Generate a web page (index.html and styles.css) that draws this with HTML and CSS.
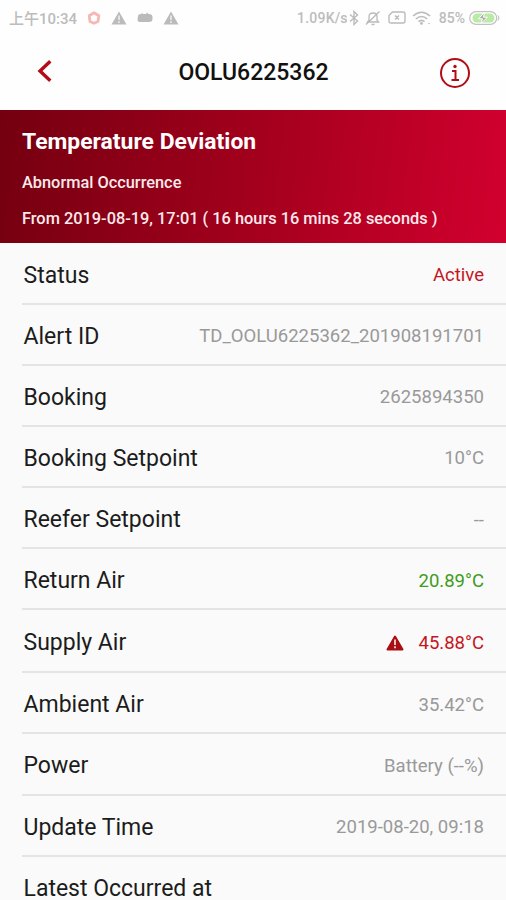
FILE: index.html
```html
<!DOCTYPE html>
<html lang="en">
<head>
    <meta charset="UTF-8">
    <meta name="viewport" content="width=device-width, initial-scale=1.0">
    <title>OOLU6225362</title>
    <link rel="stylesheet" href="styles.css">
</head>
<body>
    <div class="status-bar">
        <div class="status-left">
            <span class="clock">上午10:34</span>
            <svg class="ring" width="14" height="14" viewBox="0 0 14 14"><path d="M7 1.8L11.8 4.8 11 10.5 7 12.3 3 10.5 2.2 4.8Z" fill="none" stroke="#f6b8b2" stroke-width="2.8" stroke-linejoin="round"/></svg>
            <svg class="warn" width="16" height="14" viewBox="0 0 16 14"><path d="M8 0.5L15.5 13.5H0.5Z" fill="#bbb"/><path d="M8 4.5V9M8 10.3V12" stroke="#eee" stroke-width="1.6"/></svg>
            <svg class="robot" width="16" height="12" viewBox="0 0 16 12"><path d="M1 4Q1 2 4 2L5 1 6 2H9L10 0.5 11.5 2Q15.5 2 15.5 5V7Q15.5 10 12 10H3Q0.5 10 0.5 8Z" fill="#bbb"/></svg>
            <svg class="warn" width="16" height="14" viewBox="0 0 16 14"><path d="M8 0.5L15.5 13.5H0.5Z" fill="#bbb"/><path d="M8 4.5V9M8 10.3V12" stroke="#eee" stroke-width="1.6"/></svg>
        </div>
        <div class="status-right">
            <span class="speed">1.09K/s</span>
            <svg class="bluetooth" width="10" height="16" viewBox="0 0 10 16"><path d="M1 4.5L8.5 11 5 14.5V1.5L8.5 5 1 11.5" fill="none" stroke="#bbb" stroke-width="1.4"/></svg>
            <svg class="mute" width="16" height="16" viewBox="0 0 16 16"><path d="M2.5 12H13.5L12 10V6.5Q12 3 8 3T4 6.5V10ZM6.5 14.5H9.5M1 14.5L14.5 1.5" fill="none" stroke="#bbb" stroke-width="1.3"/></svg>
            <svg class="sim" width="18" height="13" viewBox="0 0 18 13"><path d="M4.5 1H15Q17 1 17 3V10Q17 12 15 12H3Q1 12 1 10V4.5ZM7 4.5L11 8.5M11 4.5L7 8.5" fill="none" stroke="#bbb" stroke-width="1.4"/></svg>
            <svg class="wifi" width="19" height="14" viewBox="0 0 19 14"><path d="M1 5Q9.5 -2.5 18 5M3.8 8Q9.5 3 15.2 8M6.5 10.6Q9.5 8 12.5 10.6" fill="none" stroke="#bbb" stroke-width="1.6"/><circle cx="9.5" cy="12.4" r="1.4" fill="#bbb"/><circle cx="17" cy="12.5" r="0.8" fill="#bbb"/></svg>
            <span class="percent">85%</span>
            <svg class="battery" width="31" height="14" viewBox="0 0 31 14"><rect x="0.7" y="0.7" width="27" height="12.6" rx="6.3" fill="#fff" stroke="#c2c2c2" stroke-width="1.2"/><rect x="3.5" y="2.5" width="22" height="9" rx="4.5" fill="#b9eba4"/><path d="M15.5 1.5L9.5 7.8H13.5L12 12.5 18.5 6.2H14.5Z" fill="#aaa" stroke="#fff" stroke-width="1"/><path d="M29 4.5Q31 7 29 9.5" fill="none" stroke="#bbb"/></svg>
        </div>
    </div>

    <div class="nav-bar">
        <svg class="back" width="16" height="24" viewBox="0 0 16 24"><path d="M13.3 2.2L3 12 13.3 21.8" fill="none" stroke="#b20c17" stroke-width="3.4"/></svg>
        <h1 class="nav-title">OOLU6225362</h1>
        <svg class="info" width="32" height="32" viewBox="0 0 32 32"><circle cx="16" cy="16" r="14" fill="none" stroke="#b20c17" stroke-width="2"/><circle cx="16" cy="9.5" r="1.7" fill="#b20c17"/><path d="M13 14H16.5V23M12.5 23H20" fill="none" stroke="#b20c17" stroke-width="2"/></svg>
    </div>

    <div class="banner">
        <h2 class="banner-title">Temperature Deviation</h2>
        <p class="banner-type">Abnormal Occurrence</p>
        <p class="banner-time">From 2019-08-19, 17:01 ( 16 hours 16 mins 28 seconds )</p>
    </div>

    <div class="list">
        <div class="row"><span class="label">Status</span><span class="value red">Active</span></div>
        <div class="row"><span class="label">Alert ID</span><span class="value">TD_OOLU6225362_201908191701</span></div>
        <div class="row"><span class="label">Booking</span><span class="value">2625894350</span></div>
        <div class="row"><span class="label">Booking Setpoint</span><span class="value">10°C</span></div>
        <div class="row"><span class="label">Reefer Setpoint</span><span class="value">--</span></div>
        <div class="row"><span class="label">Return Air</span><span class="value green">20.89°C</span></div>
        <div class="row row-alert">
            <span class="label">Supply Air</span>
            <span class="value red">
                <svg class="alert-icon" width="18" height="16" viewBox="0 0 18 16"><path d="M9 1.5L16.5 14.5H1.5Z" fill="#a80e14" stroke="#a80e14" stroke-width="2" stroke-linejoin="round"/><path d="M9 4.5V10M9 11.2V13.3" stroke="#e9c4c4" stroke-width="2"/></svg>45.88°C</span>
        </div>
        <div class="row"><span class="label">Ambient Air</span><span class="value">35.42°C</span></div>
        <div class="row"><span class="label">Power</span><span class="value">Battery (--%)</span></div>
        <div class="row"><span class="label">Update Time</span><span class="value">2019-08-20, 09:18</span></div>
        <div class="row"><span class="label">Latest Occurred at</span></div>
    </div>
</body>
</html>
```
FILE: styles.css
```css
body {
    font-family: Roboto, "Noto Sans CJK SC", sans-serif;
    margin: 0;
    height: 900px;
    overflow: hidden;
    background-color: #fafafa;
}
h1, h2, p {
    margin: 0;
}
.status-bar {
    display: flex;
    justify-content: space-between;
    align-items: center;
    height: 35px;
    padding: 0 6px 0 9px;
    background-color: #fefefe;
    color: #bcbcbc;
    font-size: 14px;
    font-weight: 500;
}
.status-left, .status-right {
    display: flex;
    align-items: center;
}
.clock {
    width: 68px;
    margin-right: 10px;
    font-size: 15px;
    white-space: nowrap;
}
.ring {
    margin-right: 10px;
}
.warn, .robot {
    margin-right: 10px;
}
.speed {
    letter-spacing: 0.2px;
    margin-right: 1px;
}
.bluetooth {
    margin-right: 6px;
}
.mute {
    margin-right: 7px;
}
.sim {
    margin-right: 6px;
}
.wifi {
    margin-right: 8px;
}
.percent {
    margin-right: 4px;
}
.nav-bar {
    display: flex;
    justify-content: space-between;
    align-items: center;
    box-sizing: border-box;
    height: 75px;
    padding: 0 35px 0 37px;
    background-color: #fefefe;
}
.back {
    margin-bottom: 4px;
}
.nav-title {
    /* the info icon is wider than the back arrow */
    padding-left: 15px;
    font-size: 23px;
    font-weight: 500;
    color: #111;
}
.banner {
    box-sizing: border-box;
    height: 133px;
    padding: 18px 22px 0;
    color: #fff;
    background: linear-gradient(97deg, #74000f, #a3001d 50%, #d2002e);
}
.banner-title {
    font-size: 22.9px;
    line-height: 28px;
    font-weight: 700;
}
.banner-type {
    margin-top: 16px;
    font-size: 16.35px;
    line-height: 22px;
    font-weight: 500;
    color: #fbeaec;
}
.banner-time {
    margin-top: 14px;
    font-size: 16.35px;
    line-height: 22px;
    font-weight: 500;
    color: #fbeaec;
}
.list {
    padding-top: 0.6px;
}
.row {
    display: flex;
    justify-content: space-between;
    align-items: center;
    box-sizing: border-box;
    height: 61.1px;
    margin-left: 22px;
    padding: 4px 22px 0 1.5px;
    border-bottom: 2px solid #e4e4e4;
}
.row-alert {
    height: 63.2px;
}
.label {
    font-size: 23px;
    color: #1c1c1c;
}
.value {
    display: flex;
    align-items: center;
    font-size: 18.55px;
    color: #999;
}
.red {
    color: #c4161f;
}
.green {
    color: #3f9c1c;
}
.alert-icon {
    margin-right: 14px;
}
```
